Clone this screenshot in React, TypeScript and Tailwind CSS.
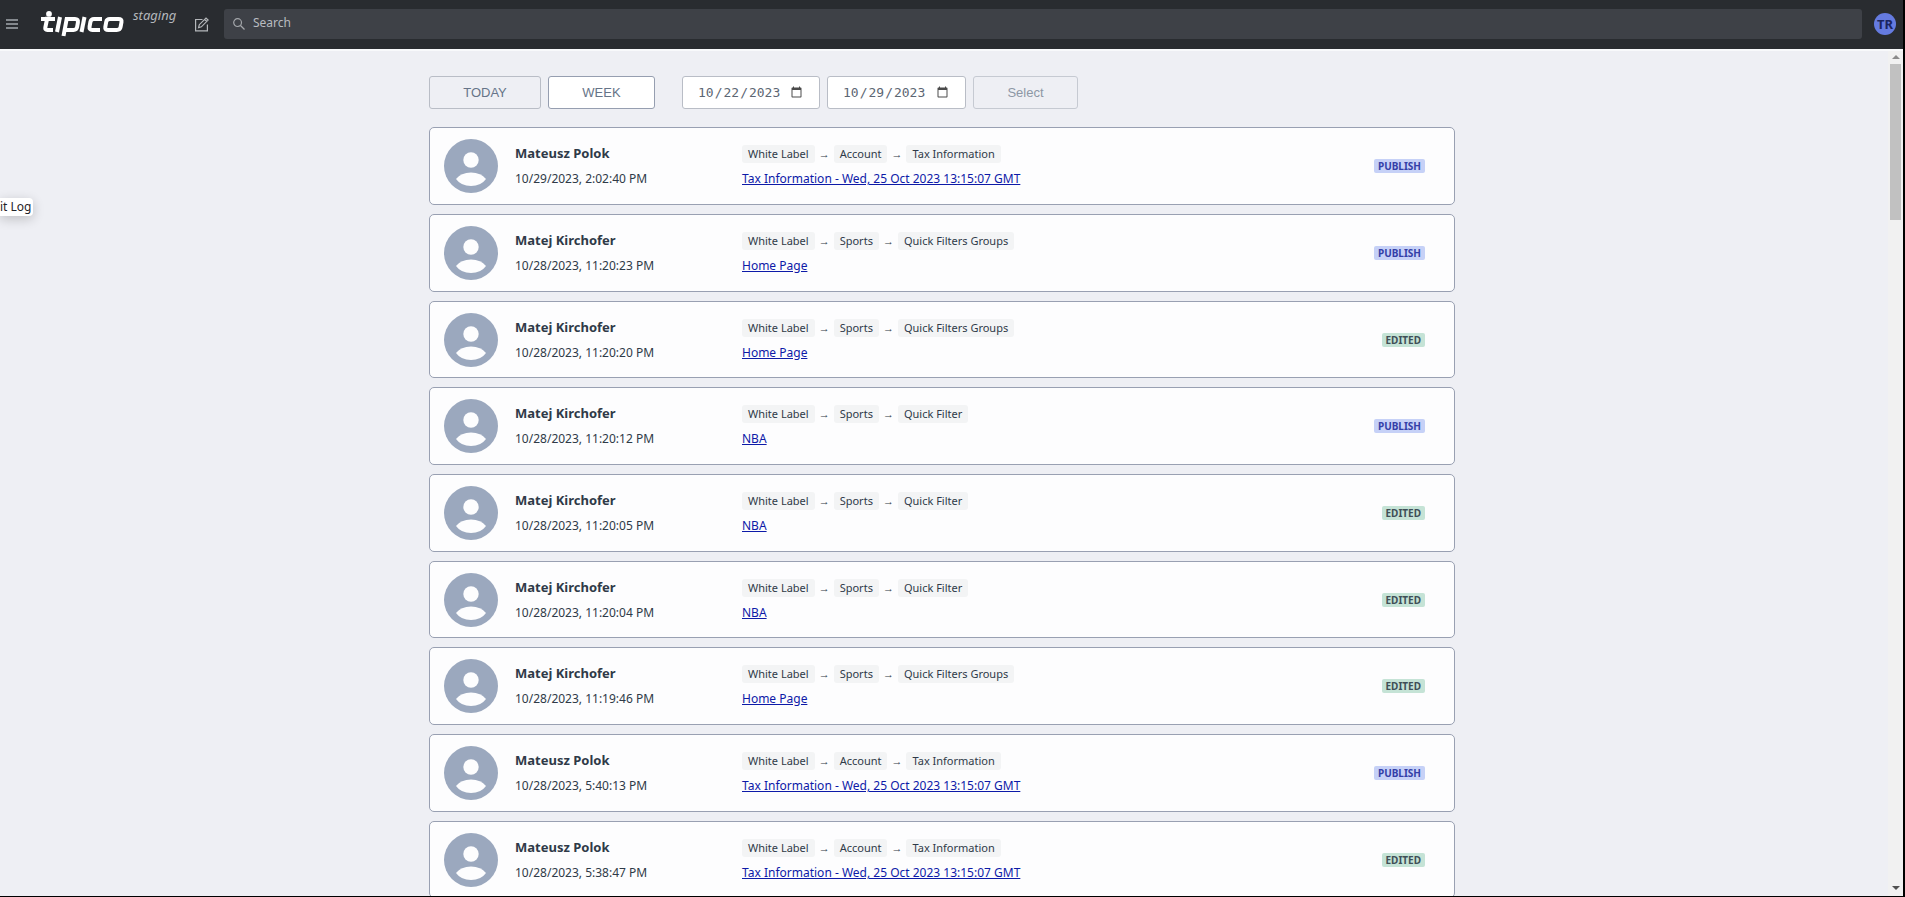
import { type ReactNode } from "react";

type Action = "PUBLISH" | "EDITED";

const logs: {
  id: number;
  user: string;
  time: string;
  path: string[];
  entry: string;
  action: Action;
}[] = [
  {
    id: 1,
    user: "Mateusz Polok",
    time: "10/29/2023, 2:02:40 PM",
    path: ["White Label", "Account", "Tax Information"],
    entry: "Tax Information - Wed, 25 Oct 2023 13:15:07 GMT",
    action: "PUBLISH",
  },
  {
    id: 2,
    user: "Matej Kirchofer",
    time: "10/28/2023, 11:20:23 PM",
    path: ["White Label", "Sports", "Quick Filters Groups"],
    entry: "Home Page",
    action: "PUBLISH",
  },
  {
    id: 3,
    user: "Matej Kirchofer",
    time: "10/28/2023, 11:20:20 PM",
    path: ["White Label", "Sports", "Quick Filters Groups"],
    entry: "Home Page",
    action: "EDITED",
  },
  {
    id: 4,
    user: "Matej Kirchofer",
    time: "10/28/2023, 11:20:12 PM",
    path: ["White Label", "Sports", "Quick Filter"],
    entry: "NBA",
    action: "PUBLISH",
  },
  {
    id: 5,
    user: "Matej Kirchofer",
    time: "10/28/2023, 11:20:05 PM",
    path: ["White Label", "Sports", "Quick Filter"],
    entry: "NBA",
    action: "EDITED",
  },
  {
    id: 6,
    user: "Matej Kirchofer",
    time: "10/28/2023, 11:20:04 PM",
    path: ["White Label", "Sports", "Quick Filter"],
    entry: "NBA",
    action: "EDITED",
  },
  {
    id: 7,
    user: "Matej Kirchofer",
    time: "10/28/2023, 11:19:46 PM",
    path: ["White Label", "Sports", "Quick Filters Groups"],
    entry: "Home Page",
    action: "EDITED",
  },
  {
    id: 8,
    user: "Mateusz Polok",
    time: "10/28/2023, 5:40:13 PM",
    path: ["White Label", "Account", "Tax Information"],
    entry: "Tax Information - Wed, 25 Oct 2023 13:15:07 GMT",
    action: "PUBLISH",
  },
  {
    id: 9,
    user: "Mateusz Polok",
    time: "10/28/2023, 5:38:47 PM",
    path: ["White Label", "Account", "Tax Information"],
    entry: "Tax Information - Wed, 25 Oct 2023 13:15:07 GMT",
    action: "EDITED",
  },
];

const badgeColors = {
  PUBLISH: "bg-[#c6d1f7] text-[#3440a8]",
  EDITED: "bg-[#c5e3d6] text-[#3f4f57]",
};

export default function App() {
  return (
    <div className="relative h-screen overflow-hidden border-r-2 border-b border-black bg-[#eeeff4] flex flex-col font-['Noto_Sans',sans-serif] text-[#2f3a48]">
      <Header />
      <div className="flex flex-1 min-h-0 border-t-2 border-[#f8f9fb]">
        <main className="flex-1 min-w-0 overflow-hidden pt-[25px] pr-1">
          <div className="mx-auto w-[1026px] max-w-full">
            <Filters />
            <ul className="mt-[18px]">
              {logs.map((log) => (
                <LogCard key={log.id} {...log} />
              ))}
            </ul>
          </div>
        </main>
        <Scrollbar />
      </div>
      {/* Sidebar tooltip */}
      <div
        role="tooltip"
        className="absolute top-[198px] left-0 h-[18px] pr-[2px] rounded-r-sm bg-white text-[12px] leading-[18px] text-[#1f2328] whitespace-nowrap shadow-[0_3px_12px_rgba(0,0,0,0.2)]"
      >
        it Log
      </div>
    </div>
  );
}

function Header() {
  return (
    <header className="flex items-center h-[49px] shrink-0 bg-[#292c30] pl-[6px] pr-[7px] pb-px">
      <button aria-label="Menu" className="text-[#84898e]">
        <svg width="12" height="10" viewBox="0 0 12 10" fill="currentColor">
          <path d="M0 0h12v2H0zM0 4h12v2H0zM0 8h12v2H0z" />
        </svg>
      </button>
      <a href="#" aria-label="tipico" className="ml-[23px]">
        <Logo />
      </a>
      <span className="ml-[9px] w-[41px] self-start mt-[6px] text-[13px] leading-[18px] italic text-[#b4b8bc]">staging</span>
      <button aria-label="Edit" className="ml-5 text-[#b4b7ba]">
        <svg width="15" height="15" viewBox="0 0 15 15" fill="none" stroke="currentColor" strokeWidth="1.2">
          <path d="M8.500 2.500H1.600v11.400h11.800V7.500" />
          <path d="M4.600 10.600l.7-2.900 6.700-6.700 2.100 2.100-6.700 6.700z M10.600 2.400l2.100 2.100" />
        </svg>
      </button>
      <label className="ml-[15px] flex flex-1 items-center h-[30px] rounded-[3px] bg-[#3e4147] pl-[9px] gap-2">
        <svg width="12" height="12" viewBox="0 0 12 12" fill="none" stroke="#a4a7ab" strokeWidth="1.2">
          <circle cx="4.600" cy="4.600" r="3.900" />
          <path d="M7.500 7.500l4 4" />
        </svg>
        <input
          type="text"
          aria-label="Search"
          placeholder="Search"
          className="flex-1 bg-transparent pb-[2px] text-[12px] leading-[18px] text-[#c9cbce] placeholder:text-[#b9bcc0] outline-none"
        />
      </label>
      <button className="ml-3 size-[22px] rounded-full bg-[#657be0] text-[13px] leading-[22px] font-bold text-[#1b2560]">TR</button>
    </header>
  );
}

function Logo() {
  return (
    <svg width="83" height="26" viewBox="0 0 83 26" fill="none" stroke="#fff" strokeWidth="4">
      <circle cx="8" cy="2.900" r="2.900" fill="#fff" stroke="none" />
      <path d="M0 8h14M6.500 6L4.300 16.500Q3.900 19 6.300 19H12" />
      <path d="M19 6l-3 15" />
      <path d="M22.500 25l3.200-17H34q3.500 0 2.900 3.500l-.8 4.500q-.5 3-3.600 3H25" />
      <path d="M43.500 6l-3 15" />
      <path d="M61 8h-8q-3 0-3.600 3l-.8 4.500q-.5 3.500 2.700 3.500H59" />
      <path d="M69 8h8.500q3.500 0 3 3l-.9 5q-.5 3-3.800 3h-8.500q-3.500 0-3-3l.9-5q.5-3 3.800-3z" />
    </svg>
  );
}

function Filters() {
  const input =
    "h-[33px] rounded-[3px] border border-[#b9bdc6] bg-white pl-[14px] pr-[14px] font-['DejaVu_Sans_Mono',monospace] text-[13px] text-[#5c6673] [&::-webkit-calendar-picker-indicator]:opacity-70";

  return (
    <form className="flex gap-[7px] h-[33px] font-['Liberation_Sans',sans-serif] text-[13px] text-[#667488]">
      <button type="button" className="w-28 rounded-[3px] border border-[#b9bdc6]">TODAY</button>
      <button type="button" className="w-[107px] rounded-[3px] border border-[#969eb0] bg-white">WEEK</button>
      <input type="date" aria-label="From" defaultValue="2023-10-22" className={`${input} ml-5 w-[138px]`} />
      <input type="date" aria-label="To" defaultValue="2023-10-29" className={`${input} w-[139px]`} />
      <button type="submit" className="w-[105px] rounded-[3px] border border-[#c6cad2] text-[#8d97a5]">Select</button>
    </form>
  );
}

function LogCard({ user, time, path, entry, action }: { user: string; time: string; path: string[]; entry: string; action: Action }) {
  return (
    <li className="mb-[9px] flex items-start rounded-[5px] border border-[#99a0b2] bg-[#fdfdfe] h-[78px] nth-[3n]:h-[77px] pl-[14px] pr-[29px] pt-[11px]">
      <Avatar />
      <div className="ml-[17px] w-[227px] leading-[18px] pt-[5px]">
        <h3 className="text-[13px] font-bold">{user}</h3>
        <time className="mt-2 block text-[12px]">{time}</time>
      </div>
      <div className="flex-1 pt-[6px]">
        <div className="flex items-center gap-1 text-[11px] leading-[18px]">
          {path.map((part, idx) => (
            <Crumb key={part} first={idx === 0}>
              {part}
            </Crumb>
          ))}
        </div>
        <a href="#" className="mt-[7px] block w-fit text-[12px] leading-[18px] text-[#0d1aa8] underline">
          {entry}
        </a>
      </div>
      <span className={`mt-[20px] h-[14px] rounded-[2px] px-1 text-[10px] leading-[14px] font-bold ${badgeColors[action]}`}>{action}</span>
    </li>
  );
}

function Crumb({ first, children }: { first: boolean; children: ReactNode }) {
  return (
    <>
      {!first && <span className="font-['Liberation_Sans',sans-serif]">→</span>}
      <span className="rounded-[3px] bg-[#f3f4f5] px-[6px]">{children}</span>
    </>
  );
}

function Avatar() {
  return (
    <svg width="54" height="54" viewBox="0 0 54 54" className="shrink-0">
      <circle cx="27" cy="27" r="27" fill="#9ba8be" />
      <circle cx="27" cy="21" r="7.700" fill="#fdfdfe" />
      <path d="M12 40Q17 33.500 27 33.500T42 40Q37 47 27 47T12 40z" fill="#fdfdfe" />
    </svg>
  );
}

function Scrollbar() {
  return (
    <div className="w-[15px] shrink-0 bg-[#f1f1f1] flex flex-col items-center pt-1 pb-[6px]" aria-hidden="true">
      <svg width="8" height="4" viewBox="0 0 8 4">
        <path d="M0 4l4-4 4 4z" fill="#8b8b8b" />
      </svg>
      <div className="mt-[5px] h-[156px] w-[11px] bg-[#c1c1c1]" />
      <svg width="8" height="4" viewBox="0 0 8 4" className="mt-auto">
        <path d="M0 0l4 4 4-4z" fill="#505050" />
      </svg>
    </div>
  );
}
